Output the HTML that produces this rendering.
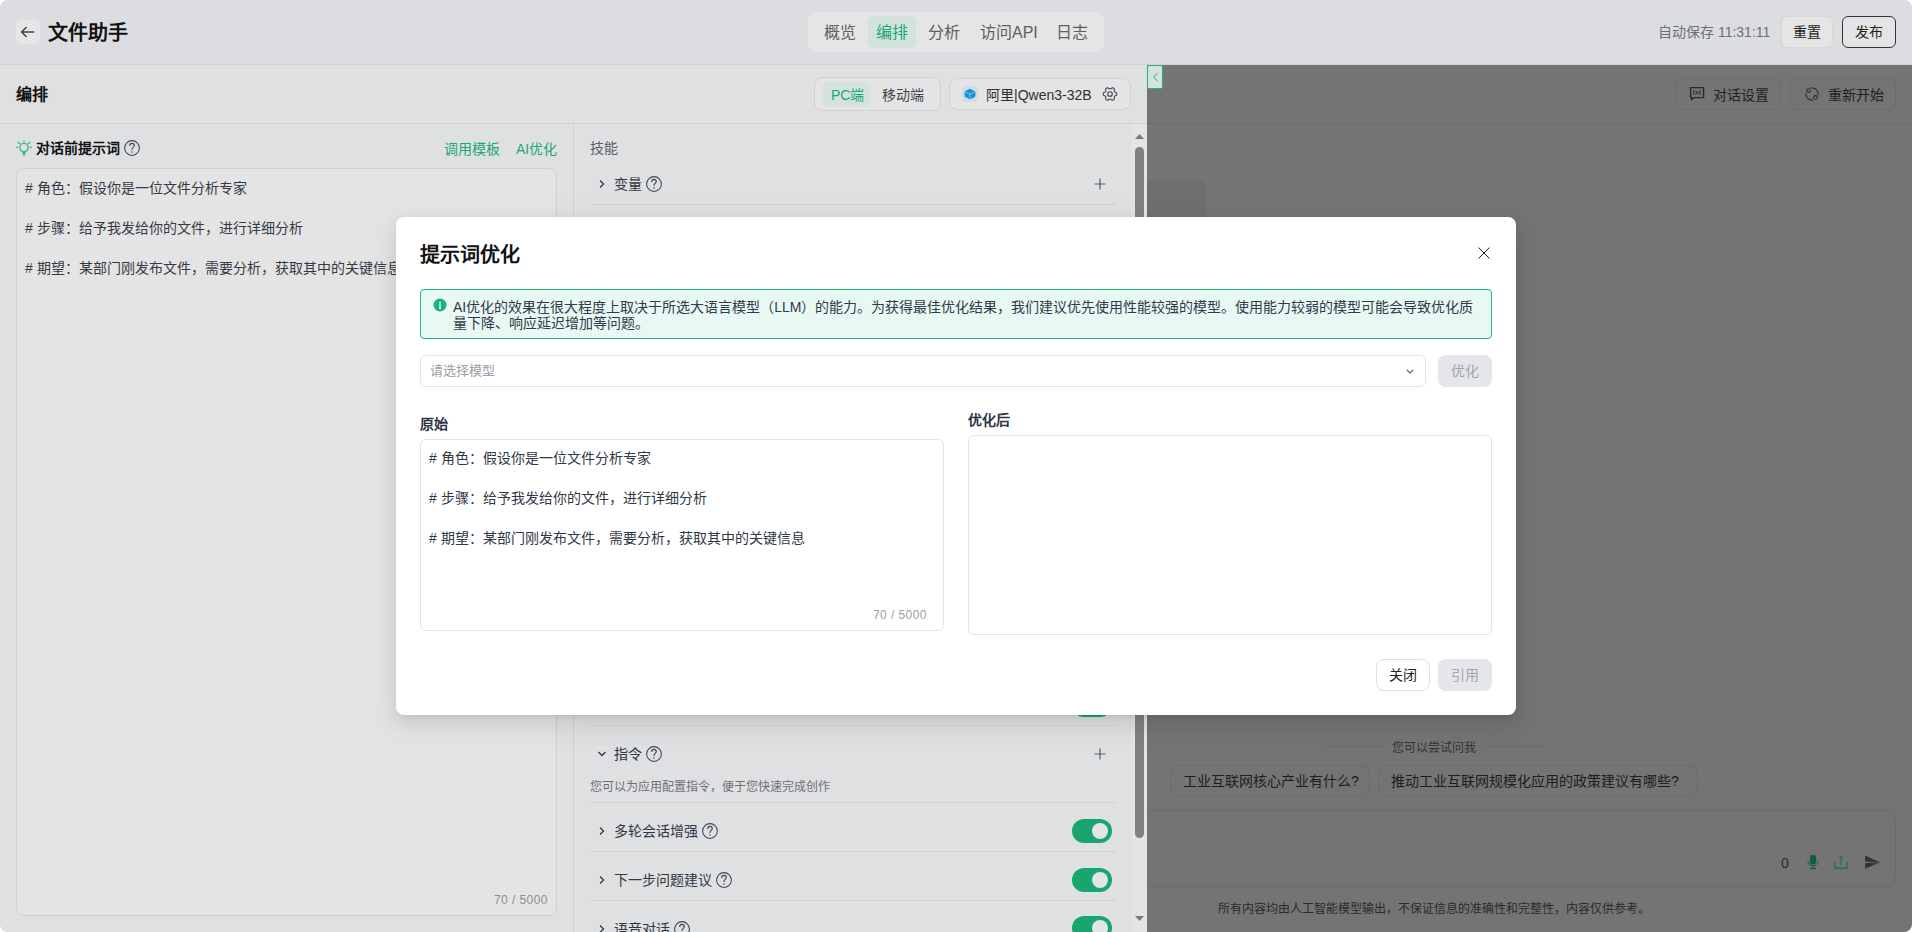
<!DOCTYPE html>
<html lang="zh-CN">
<head>
<meta charset="utf-8">
<style>
*{box-sizing:border-box;margin:0;padding:0}
html,body{width:1912px;height:932px;overflow:hidden;background:#fff}
body{font-family:"Liberation Sans",sans-serif;position:relative;color:#333}
.a{position:absolute;white-space:nowrap}
#win{position:absolute;left:0;top:0;width:1912px;height:932px;border-radius:8px;overflow:hidden;background:#dfe0e2}
#hdr{left:0;top:0;width:1912px;height:65px;background:#dcdde0;border-bottom:1px solid #cfd0d3}
#row2{left:0;top:65px;width:1147px;height:59px;background:#dfe0e2;border-bottom:1px solid #d0d1d4}
#left{left:0;top:124px;width:573px;height:808px;background:#dfe0e2}
#vdiv{left:573px;top:124px;width:1px;height:808px;background:#d0d1d4}
#mid{left:574px;top:124px;width:573px;height:808px;background:#dfe0e2}
#right{left:1147px;top:65px;width:765px;height:867px;background:#747474;overflow:hidden}
.t14{font-size:14px;line-height:20px}
.t12{font-size:12px;line-height:18px}
.t16{font-size:16px;line-height:22px}
.green{color:#1aa774}
.q{display:inline-block;width:16px;height:16px;border:1px solid #555b66;border-radius:50%;font-size:12px;line-height:14px;text-align:center;color:#555b66}
#mask{left:0;top:0;width:1912px;height:932px}
#modal{left:396px;top:217px;width:1120px;height:498px;background:#fff;border-radius:8px;box-shadow:0 6px 16px rgba(0,0,0,.08),0 3px 6px -4px rgba(0,0,0,.12),0 9px 28px 8px rgba(0,0,0,.05)}
.toggle{position:absolute;width:40px;height:24px;border-radius:12px;background:#18a56f}
.toggle::after{content:"";position:absolute;right:4px;top:4px;width:16px;height:16px;border-radius:50%;background:#e3e4e6}
.hl{position:absolute;height:1px;background:#d0d1d4}
</style>
</head>
<body>
<div id="win">
  <!-- header -->
  <div id="hdr" class="a">
    <div class="a" style="left:16px;top:20px;width:24px;height:24px;border-radius:6px;background:#e6e6e7">
      <svg width="24" height="24" viewBox="0 0 24 24" style="position:absolute;left:0;top:0"><path d="M17.6 12H5.6M10.1 7.5L5.6 12L10.1 16.5" fill="none" stroke="#3b4453" stroke-width="1.5" stroke-linecap="round" stroke-linejoin="round"/></svg>
    </div>
    <div class="a" style="left:48px;top:20px;font-size:20px;line-height:26px;font-weight:bold;color:#111">文件助手</div>

    <div class="a" style="left:808px;top:12px;width:296px;height:40px;border-radius:8px;background:#e5e5e6"></div>
    <div class="a" style="left:868px;top:16px;width:48px;height:32px;border-radius:6px;background:#d3e3dc"></div>
    <div class="a t16" style="left:824px;top:22px;color:#5a5f69">概览</div>
    <div class="a t16 green" style="left:876px;top:22px">编排</div>
    <div class="a t16" style="left:928px;top:22px;color:#5a5f69">分析</div>
    <div class="a t16" style="left:980px;top:22px;color:#5a5f69">访问API</div>
    <div class="a t16" style="left:1056px;top:22px;color:#5a5f69">日志</div>

    <div class="a t14" style="left:1658px;top:22px;color:#6b7078">自动保存 11:31:11</div>
    <div class="a t14" style="left:1781px;top:16px;width:52px;height:32px;border:1px solid #d6d6d8;border-radius:6px;background:#e5e5e6;text-align:center;line-height:31.5px;color:#222">重置</div>
    <div class="a t14" style="left:1842px;top:16px;width:54px;height:32px;border:1px solid #2b3445;border-radius:6px;background:#e4e4e5;text-align:center;line-height:31.5px;color:#222">发布</div>
  </div>

  <!-- row2 -->
  <div id="row2" class="a">
    <div class="a t16" style="left:16px;top:19px;font-weight:bold;color:#111">编排</div>
    <div class="a" style="left:814px;top:12px;width:127px;height:34px;border:1px solid #d0d1d4;border-radius:8px;background:#e3e4e5"></div>
    <div class="a" style="left:823px;top:17px;width:47px;height:24px;border-radius:5px;background:#d3e3dc"></div>
    <div class="a t14 green" style="left:831px;top:20px">PC端</div>
    <div class="a t14" style="left:882px;top:20px;color:#444">移动端</div>

    <div class="a" style="left:949px;top:13px;width:182px;height:32px;border:1px solid #d0d1d4;border-radius:8px;background:#e4e4e5"></div>
    <div class="a" style="left:962px;top:21px;width:16px;height:16px;border-radius:3px;background:#cfdde6">
      <svg width="16" height="16" viewBox="0 0 16 16" style="position:absolute;left:0;top:0"><path d="M8 3.2L12.9 5.7V10.4L8 12.9L3.1 10.4V5.7Z" fill="#1592d5" stroke="#1592d5" stroke-width="1" stroke-linejoin="round"/><path d="M3.1 5.7L8 8.2L12.9 5.7M8 8.2V13" fill="none" stroke="#b9d9ec" stroke-width=".7"/></svg>
    </div>
    <div class="a t14" style="left:986px;top:20px;color:#2a2f38">阿里|Qwen3-32B</div>
    <svg class="a" style="left:1102px;top:20.8px" width="16" height="16" viewBox="0 0 16 16"><path d="M14.8 8.0L14.8 8.4L14.6 8.9L14.4 9.3L13.8 9.6L13.2 9.8L12.9 10.0L12.7 10.3L12.5 10.6L12.3 10.9L12.2 11.2L12.2 11.6L12.2 12.2L12.3 12.9L12.1 13.3L11.8 13.7L11.4 13.9L11.0 14.1L10.6 14.2L10.1 14.1L9.6 13.8L9.1 13.4L8.7 13.3L8.3 13.2L8.0 13.2L7.7 13.2L7.3 13.3L6.9 13.4L6.4 13.8L5.9 14.1L5.4 14.2L5.0 14.1L4.6 13.9L4.2 13.7L3.9 13.3L3.7 12.9L3.8 12.2L3.8 11.6L3.8 11.2L3.7 10.9L3.5 10.6L3.3 10.3L3.1 10.0L2.8 9.8L2.2 9.6L1.6 9.3L1.4 8.9L1.2 8.4L1.2 8.0L1.2 7.6L1.4 7.1L1.6 6.7L2.2 6.4L2.8 6.2L3.1 6.0L3.3 5.7L3.5 5.4L3.7 5.1L3.8 4.8L3.8 4.4L3.8 3.8L3.7 3.1L3.9 2.7L4.2 2.3L4.6 2.1L5.0 1.9L5.4 1.8L5.9 1.9L6.4 2.2L6.9 2.6L7.3 2.7L7.7 2.8L8.0 2.8L8.3 2.8L8.7 2.7L9.1 2.6L9.6 2.2L10.1 1.9L10.6 1.8L11.0 1.9L11.4 2.1L11.8 2.3L12.1 2.7L12.3 3.1L12.2 3.8L12.2 4.4L12.2 4.8L12.3 5.1L12.5 5.4L12.7 5.7L12.9 6.0L13.2 6.2L13.8 6.4L14.4 6.7L14.6 7.1L14.8 7.6Z" fill="none" stroke="#3b4453" stroke-width="1.1" stroke-linejoin="round"/><circle cx="8" cy="8" r="2.3" fill="none" stroke="#3b4453" stroke-width="1.1"/></svg>
  </div>

  <!-- left panel -->
  <div id="left" class="a">
    <svg class="a" style="left:16px;top:16px" width="16" height="16" viewBox="0 0 16 16"><circle cx="8" cy="7.5" r="4.15" fill="none" stroke="#3ab489" stroke-width="1.35"/><path d="M6.1 11.5H9.9L9.4 14.3H6.6Z" fill="#3ab489"/><path d="M7 15.3H9" stroke="#1fa774" stroke-width="1"/><path d="M8 0.6V1.3M2.4 2.4L3.5 3.4M13.6 2.4L12.5 3.4M0.5 7.3H1.7M14.3 7.3H15.5" stroke="#3ab489" stroke-width="1.3" stroke-linecap="round"/></svg>
    <div class="a t14" style="left:36px;top:14px;font-weight:bold;color:#111">对话前提示词</div>
    <svg class="a" style="left:124px;top:16px" width="16" height="16" viewBox="0 0 16 16"><circle cx="8" cy="8" r="7.4" fill="none" stroke="#3f4653" stroke-width="1.05"/><path d="M5.7 5.9C5.7 4.4 6.7 3.4 8 3.4C9.3 3.4 10.3 4.3 10.3 5.6C10.3 7.3 8 7.5 8 9.4V10" fill="none" stroke="#3f4653" stroke-width="1.15"/><circle cx="8" cy="12" r=".8" fill="#3f4653"/></svg>
    <div class="a t14 green" style="left:444px;top:15px">调用模板</div>
    <div class="a t14 green" style="left:516px;top:15px">AI优化</div>
    <div class="a" style="left:16px;top:44px;width:541px;height:748px;border:1px solid #cfd0d4;border-radius:8px;background:#e4e4e4"></div>
    <div class="a t14" style="left:25px;top:54px;color:#333a45;line-height:20px">
      # 角色：假设你是一位文件分析专家<br><br># 步骤：给予我发给你的文件，进行详细分析<br><br># 期望：某部门刚发布文件，需要分析，获取其中的关键信息
    </div>
    <div class="a t12" style="left:494px;top:767px;color:#8a8e95;letter-spacing:.42px">70 / 5000</div>
  </div>
  <div id="vdiv" class="a"></div>

  <!-- middle panel -->
  <div id="mid" class="a">
    <div class="a t14" style="left:16px;top:13.5px;color:#5a5f69">技能</div>
    <svg class="a" style="left:23px;top:55px" width="10" height="10" viewBox="0 0 10 10"><path d="M3 1.5L6.5 5L3 8.5" fill="none" stroke="#2f3845" stroke-width="1.3"/></svg>
    <div class="a t14" style="left:40px;top:50px;color:#2f3845">变量</div>
    <svg class="a" style="left:72px;top:52px" width="16" height="16" viewBox="0 0 16 16"><circle cx="8" cy="8" r="7.4" fill="none" stroke="#3f4653" stroke-width="1.05"/><path d="M5.7 5.9C5.7 4.4 6.7 3.4 8 3.4C9.3 3.4 10.3 4.3 10.3 5.6C10.3 7.3 8 7.5 8 9.4V10" fill="none" stroke="#3f4653" stroke-width="1.15"/><circle cx="8" cy="12" r=".8" fill="#3f4653"/></svg>
    <svg class="a" style="left:520px;top:54px" width="12" height="12" viewBox="0 0 12 12"><path d="M6 0.5V11.5M0.5 6H11.5" stroke="#555b66" stroke-width="1.2"/></svg>
    <div class="hl" style="left:16px;top:80px;width:526px"></div>

    <div class="hl" style="left:16px;top:601px;width:526px"></div>
    <div class="toggle" style="left:498px;top:569px"></div>

    <svg class="a" style="left:23px;top:625px" width="10" height="10" viewBox="0 0 10 10"><path d="M1.5 3L5 6.5L8.5 3" fill="none" stroke="#2f3845" stroke-width="1.3"/></svg>
    <div class="a t14" style="left:40px;top:620px;color:#2f3845">指令</div>
    <svg class="a" style="left:72px;top:622px" width="16" height="16" viewBox="0 0 16 16"><circle cx="8" cy="8" r="7.4" fill="none" stroke="#3f4653" stroke-width="1.05"/><path d="M5.7 5.9C5.7 4.4 6.7 3.4 8 3.4C9.3 3.4 10.3 4.3 10.3 5.6C10.3 7.3 8 7.5 8 9.4V10" fill="none" stroke="#3f4653" stroke-width="1.15"/><circle cx="8" cy="12" r=".8" fill="#3f4653"/></svg>
    <svg class="a" style="left:520px;top:624px" width="12" height="12" viewBox="0 0 12 12"><path d="M6 0.5V11.5M0.5 6H11.5" stroke="#555b66" stroke-width="1.2"/></svg>
    <div class="a t12" style="left:16px;top:654px;color:#6b7078">您可以为应用配置指令，便于您快速完成创作</div>
    <div class="hl" style="left:16px;top:678px;width:526px"></div>

    <svg class="a" style="left:23px;top:702px" width="10" height="10" viewBox="0 0 10 10"><path d="M3 1.5L6.5 5L3 8.5" fill="none" stroke="#2f3845" stroke-width="1.3"/></svg>
    <div class="a t14" style="left:40px;top:697px;color:#2f3845">多轮会话增强</div>
    <svg class="a" style="left:128px;top:699px" width="16" height="16" viewBox="0 0 16 16"><circle cx="8" cy="8" r="7.4" fill="none" stroke="#3f4653" stroke-width="1.05"/><path d="M5.7 5.9C5.7 4.4 6.7 3.4 8 3.4C9.3 3.4 10.3 4.3 10.3 5.6C10.3 7.3 8 7.5 8 9.4V10" fill="none" stroke="#3f4653" stroke-width="1.15"/><circle cx="8" cy="12" r=".8" fill="#3f4653"/></svg>
    <div class="toggle" style="left:498px;top:695px"></div>
    <div class="hl" style="left:16px;top:727px;width:526px"></div>

    <svg class="a" style="left:23px;top:751px" width="10" height="10" viewBox="0 0 10 10"><path d="M3 1.5L6.5 5L3 8.5" fill="none" stroke="#2f3845" stroke-width="1.3"/></svg>
    <div class="a t14" style="left:40px;top:746px;color:#2f3845">下一步问题建议</div>
    <svg class="a" style="left:142px;top:748px" width="16" height="16" viewBox="0 0 16 16"><circle cx="8" cy="8" r="7.4" fill="none" stroke="#3f4653" stroke-width="1.05"/><path d="M5.7 5.9C5.7 4.4 6.7 3.4 8 3.4C9.3 3.4 10.3 4.3 10.3 5.6C10.3 7.3 8 7.5 8 9.4V10" fill="none" stroke="#3f4653" stroke-width="1.15"/><circle cx="8" cy="12" r=".8" fill="#3f4653"/></svg>
    <div class="toggle" style="left:498px;top:744px"></div>
    <div class="hl" style="left:16px;top:776px;width:526px"></div>

    <svg class="a" style="left:23px;top:800px" width="10" height="10" viewBox="0 0 10 10"><path d="M3 1.5L6.5 5L3 8.5" fill="none" stroke="#2f3845" stroke-width="1.3"/></svg>
    <div class="a t14" style="left:40px;top:795px;color:#2f3845">语音对话</div>
    <svg class="a" style="left:100px;top:797px" width="16" height="16" viewBox="0 0 16 16"><circle cx="8" cy="8" r="7.4" fill="none" stroke="#3f4653" stroke-width="1.05"/><path d="M5.7 5.9C5.7 4.4 6.7 3.4 8 3.4C9.3 3.4 10.3 4.3 10.3 5.6C10.3 7.3 8 7.5 8 9.4V10" fill="none" stroke="#3f4653" stroke-width="1.15"/><circle cx="8" cy="12" r=".8" fill="#3f4653"/></svg>
    <div class="toggle" style="left:498px;top:792px"></div>

    <!-- scrollbar -->
    <div class="a" style="left:558px;top:0;width:15px;height:808px;background:#e4e4e4"></div>
    <svg class="a" style="left:561px;top:10px" width="9" height="5" viewBox="0 0 9 5"><path d="M0 5L4.5 0L9 5Z" fill="#7a7a7a"/></svg>
    <div class="a" style="left:561px;top:23px;width:9px;height:691px;border-radius:5px;background:#808080"></div>
    <svg class="a" style="left:561px;top:792px" width="9" height="5" viewBox="0 0 9 5"><path d="M0 0L4.5 5L9 0Z" fill="#7a7a7a"/></svg>
  </div>

  <!-- right preview -->
  <div id="right" class="a">
    <div class="a" style="left:0;top:0;width:16px;height:24px;border:1px solid #21b37f;border-radius:2px;background:#d5e2dc"></div>
    <svg class="a" style="left:4px;top:7px" width="9" height="10" viewBox="0 0 9 10"><path d="M6.5 0.8L2.8 5L6.5 9.2" fill="none" stroke="#21b37f" stroke-width="1"/></svg>
    <div class="hl" style="left:0;top:58px;width:765px;background:#6c6c6c"></div>
    <div class="a t14" style="left:529px;top:13px;width:105px;height:32px;border:1px solid #6c6c6c;border-radius:6px;color:#1d2129"></div>
    <div class="a t14" style="left:566px;top:20px;color:#1d2129">对话设置</div>
    <svg class="a" style="left:542px;top:21px" width="16" height="16" viewBox="0 0 16 16"><path d="M1.6 1.6H14.6V11.6H5L2.6 13.8V11.6H1.6Z" fill="none" stroke="#262a33" stroke-width="1.4" stroke-linejoin="round"/><path d="M5.3 4.6H4.8V8.6H5.3M10.7 4.6H11.2V8.6H10.7M6.6 5.1L9.4 8.1M9.4 5.1L6.6 8.1" fill="none" stroke="#262a33" stroke-width="1"/></svg>
    <svg class="a" style="left:657px;top:21px" width="16" height="16" viewBox="0 0 16 16"><circle cx="4.6" cy="4.6" r="1.8" fill="none" stroke="#2a2f38" stroke-width="1.1"/><circle cx="11.4" cy="11.4" r="1.8" fill="none" stroke="#2a2f38" stroke-width="1.1"/><path d="M7 1.9A6.3 6.3 0 0 1 14.1 9" fill="none" stroke="#2a2f38" stroke-width="1.1"/><path d="M1.9 7A6.3 6.3 0 0 0 9 14.1" fill="none" stroke="#2a2f38" stroke-width="1.1"/></svg>
    <div class="a t14" style="left:643px;top:13px;width:106px;height:32px;border:1px solid #6c6c6c;border-radius:6px"></div>
    <div class="a t14" style="left:681px;top:20px;color:#1d2129">重新开始</div>
    <div class="a" style="left:-10px;top:115px;width:69px;height:530px;border-radius:8px;background:#6e6f71"></div>

    <div class="a" style="left:177px;top:681px;width:60px;height:1px;background:#6b6b6b"></div>
    <div class="a t12" style="left:245px;top:673.5px;color:#333">您可以尝试问我</div>
    <div class="a" style="left:337px;top:681px;width:60px;height:1px;background:#6b6b6b"></div>
    <div class="a t14" style="left:23px;top:700px;width:200px;height:31px;border:1px solid #6c6c6c;border-radius:8px;padding-left:12px;line-height:30px;color:#1a1d23">工业互联网核心产业有什么?</div>
    <div class="a t14" style="left:231px;top:700px;width:320px;height:31px;border:1px solid #6c6c6c;border-radius:8px;padding-left:12px;line-height:30px;color:#1a1d23">推动工业互联网规模化应用的政策建议有哪些?</div>
    <div class="a" style="left:-20px;top:745px;width:769px;height:77px;border:1px solid #6a6b6d;border-radius:10px"></div>
    <div class="a t14" style="left:634px;top:788px;color:#2a2a2a">0</div>
    <svg class="a" style="left:659px;top:789px" width="14" height="16" viewBox="0 0 14 16"><rect x="3.9" y="0.8" width="6.2" height="9.8" rx="3" fill="#0f5f3e"/><path d="M1.8 6.6A5.2 5.2 0 0 0 12.2 6.6" fill="none" stroke="#0f5f3e" stroke-width="1"/><path d="M7 12V14M4 14.6H10" stroke="#0f5f3e" stroke-width="1.2"/></svg>
    <svg class="a" style="left:686px;top:789px" width="16" height="16" viewBox="0 0 16 16"><path d="M1.9 7.4V14.3H14.1V7.4" fill="none" stroke="#2c6b50" stroke-width="1.4" stroke-linejoin="round"/><path d="M8 10.8V2.4" stroke="#2c6b50" stroke-width="1.2"/><path d="M5.3 5L8 2.2L10.7 5" fill="none" stroke="#2c6b50" stroke-width="1"/></svg>
    <svg class="a" style="left:717px;top:789px" width="17" height="16" viewBox="0 0 17 16"><path d="M1.1 1.4L16 8.2L1.1 7.4ZM1.1 9L16 8.2L1.1 14.8Z" fill="#2f3440"/></svg>
    <div class="a t12" style="left:71px;top:835px;color:#2a2a2a">所有内容均由人工智能模型输出，不保证信息的准确性和完整性，内容仅供参考。</div>
  </div>

  <!-- modal -->
  <div id="modal" class="a">
    <div class="a" style="left:24px;top:24px;font-size:20px;line-height:28px;font-weight:bold;color:#111">提示词优化</div>
    <svg class="a" style="left:1082px;top:30px" width="12" height="12" viewBox="0 0 12 12"><path d="M0.5 0.5L11.5 11.5M11.5 0.5L0.5 11.5" stroke="#111" stroke-width="0.95"/></svg>
    <div class="a" style="left:24px;top:72px;width:1072px;height:50px;border:1px solid #22b682;border-radius:4px;background:#e8f8f2"></div>
    <svg class="a" style="left:37px;top:81px" width="14" height="14" viewBox="0 0 14 14"><circle cx="7" cy="7" r="6.5" fill="#1eb27f"/><path d="M7 3.4V9" stroke="#fff" stroke-width="1.1"/><circle cx="7" cy="9.9" r="1.1" fill="#fff"/></svg>
    <div class="a t14" style="left:57px;top:82px;line-height:16px;white-space:normal;width:1030px;color:#303a4a">AI优化的效果在很大程度上取决于所选大语言模型（LLM）的能力。为获得最佳优化结果，我们建议优先使用性能较强的模型。使用能力较弱的模型可能会导致优化质量下降、响应延迟增加等问题。</div>

    <div class="a" style="left:24px;top:138px;width:1006px;height:32px;border:1px solid #e3e4e7;border-radius:6px"></div>
    <div class="a t14" style="left:34px;top:144px;color:#9aa0a8;font-size:13px">请选择模型</div>
    <svg class="a" style="left:1010px;top:152px" width="8" height="5" viewBox="0 0 8 5"><path d="M0.8 0.8L4 4L7.2 0.8" fill="none" stroke="#555" stroke-width="1.1"/></svg>
    <div class="a t14" style="left:1042px;top:138px;width:54px;height:32px;border-radius:8px;background:#e5e6ea;color:#a0a5ad;text-align:center;line-height:33.5px">优化</div>

    <div class="a t14" style="left:24px;top:197px;font-weight:bold;color:#2d3545">原始</div>
    <div class="a" style="left:24px;top:222px;width:524px;height:192px;border:1px solid #e3e4e7;border-radius:6px"></div>
    <div class="a t14" style="left:33px;top:231px;color:#2f3846;line-height:20px"># 角色：假设你是一位文件分析专家<br><br># 步骤：给予我发给你的文件，进行详细分析<br><br># 期望：某部门刚发布文件，需要分析，获取其中的关键信息</div>
    <div class="a t12" style="left:477px;top:389px;color:#9aa0a8;letter-spacing:.42px">70 / 5000</div>

    <div class="a t14" style="left:572px;top:193px;font-weight:bold;color:#2d3545">优化后</div>
    <div class="a" style="left:572px;top:218px;width:524px;height:200px;border:1px solid #e3e4e7;border-radius:6px"></div>

    <div class="a t14" style="left:980px;top:442px;width:54px;height:32px;border:1px solid #dfe0e3;border-radius:8px;text-align:center;line-height:31.5px;color:#222">关闭</div>
    <div class="a t14" style="left:1042px;top:442px;width:54px;height:32px;border-radius:8px;background:#e5e6ea;color:#a0a5ad;text-align:center;line-height:33.5px">引用</div>
  </div>
</div>
</body>
</html>
